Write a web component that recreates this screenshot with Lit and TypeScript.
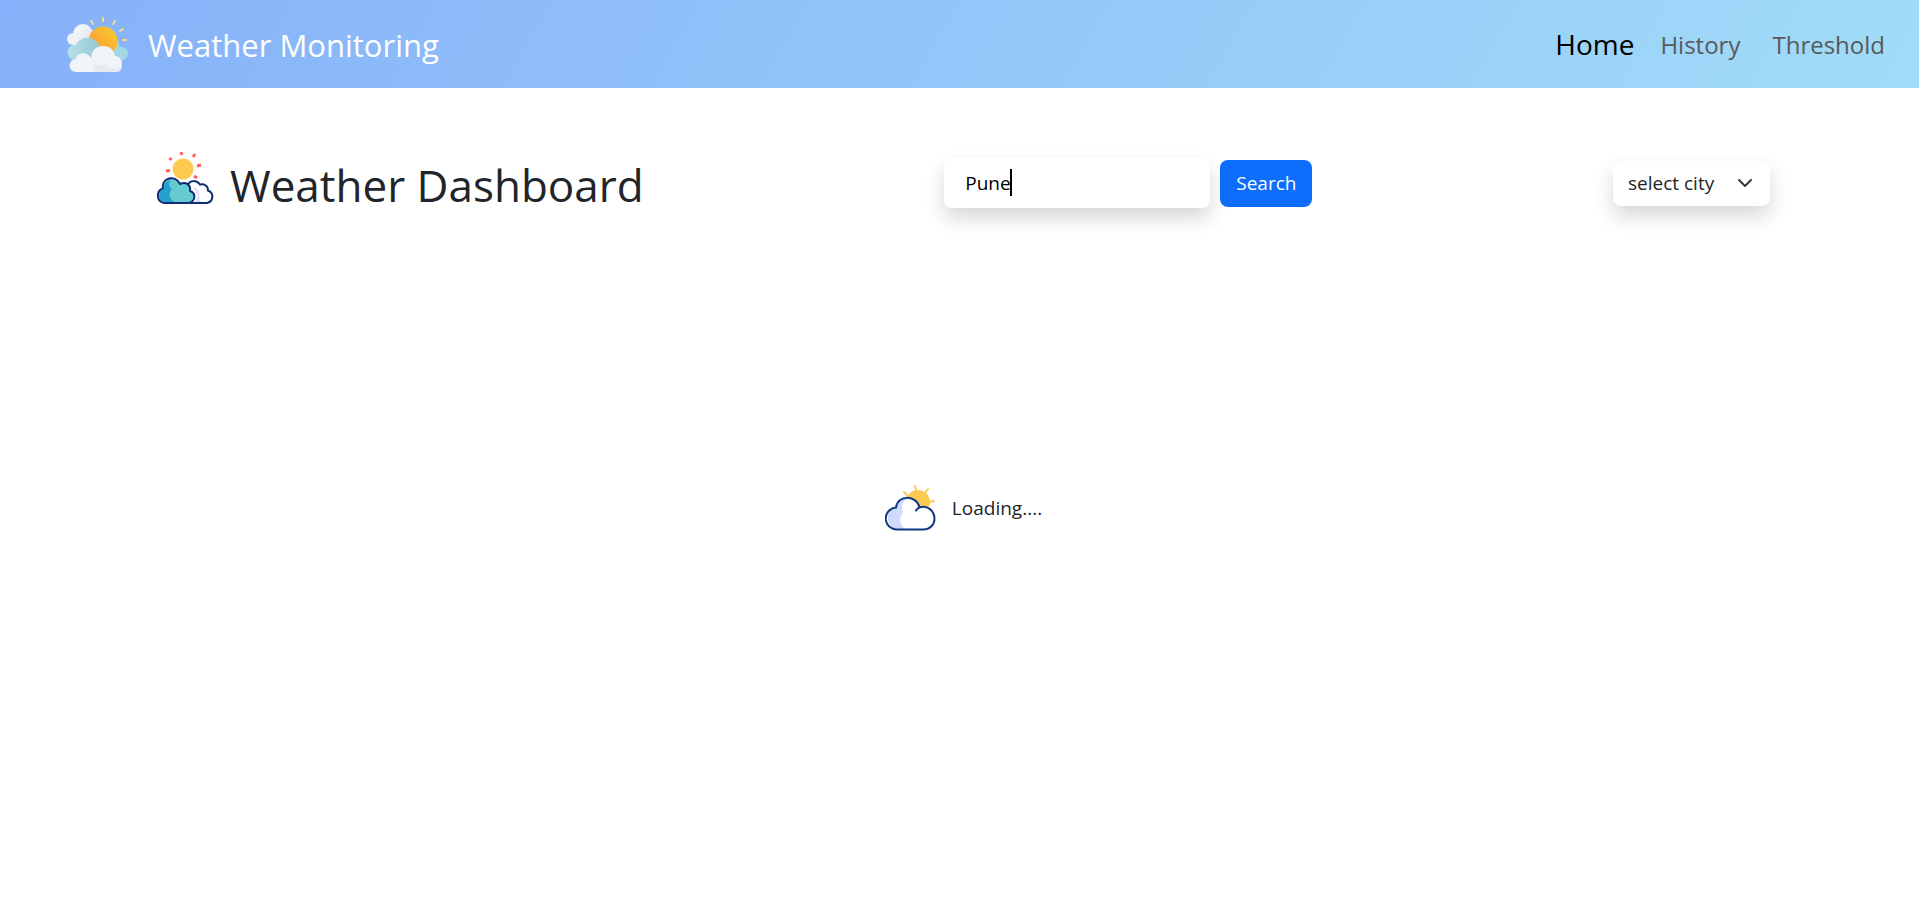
import { LitElement, html, css } from "lit";
import { customElement, state } from "lit/decorators.js";

const logo = html`<svg class="logo" viewBox="0 0 66 58" aria-hidden="true">
  <defs>
    <linearGradient id="sun" x1="0" y1="1" x2="1" y2="0">
      <stop offset="0.25" stop-color="#ffa034" /><stop offset="0.9" stop-color="#f4c92e" />
    </linearGradient>
    <linearGradient id="teal" x1="0" x2="1">
      <stop offset="0" stop-color="#b5dfe6" /><stop offset="1" stop-color="#93c9d6" />
    </linearGradient>
    <linearGradient id="pale" x1="0" y1="0" x2="1" y2="1">
      <stop offset="0.2" stop-color="#f4f6f9" /><stop offset="1" stop-color="#dce3eb" />
    </linearGradient>
  </defs>
  <g stroke="#f6dc86" stroke-width="2" stroke-linecap="round">
    <path d="M39 2v3M27 5l2 3M51 5l-2 3M59 13l-3 2M59 24h3" />
  </g>
  <circle cx="9" cy="23" r="6" fill="#eef0f5" />
  <circle cx="19" cy="18" r="10" fill="url(#pale)" />
  <path d="M8 23h20v6H9z" fill="#eef0f5" />
  <path d="M52 23c2 2 3 4 3 8 5-1 9 2 9 6.500s-3 6.500-7 6.500H44z" fill="#a3d8e2" />
  <circle cx="39" cy="25" r="14.500" fill="url(#sun)" />
  <path d="M9 44a8 8 0 0 1 0-15h3c3-6 9-8 14-7 6 1 11 7 10 14l-4 9z" fill="url(#teal)" />
  <path d="M12 56a6.500 6.500 0 0 1 0-13c0-7 12-8 15-1 1-9 6-12 12-12 7 0 11 4 12 10 5 0 7 4 7 8 0 5-2 8-6 8z" fill="#f1f4f7" />
  <path d="M27 43c4 3 5 9 2 13h23c4 0 6-3 6-6-8 5-14 2-16-2-5 4-12 1-15-5z" fill="#e4eaf0" />
</svg>`;

const dashboardIcon = html`<svg class="dash-icon" viewBox="0 0 57 54" aria-hidden="true">
  <g stroke="#ff6259" stroke-width="3">
    <path d="M24 0l1 3M38 2l-2 3M12.500 6l2 2M9 19l4-.5M40 14l4-1M37 24l3 2" />
  </g>
  <circle cx="26" cy="17" r="10.500" fill="#fecb50" />
  <path d="M34 51h16a6.500 6.500 0 0 0 1-12.500c0-5-4-7-8-6-4-5-10-4-12 0z" fill="#fff" stroke="#122d72" stroke-width="2" />
  <path d="M36 36c5 3 6 9 2 14h6c-3-3-1-8-2-10-1-3-4-5-6-4z" fill="#d6defa" />
  <path d="M7 51a7.500 7.500 0 0 1-1-14.500C4 26 18 22 23 32c6-3 11 1 10 7 6 2 6 10-1 12z" fill="#66cbd0" stroke="#122d72" stroke-width="2" stroke-linejoin="round" />
  <path d="M14 28c-5 1-8 4-7 9-7 2-6 13 1 13h9c-5-4-6-9-2-13-4-3-3-7-1-9z" fill="#26a0cf" />
</svg>`;

const loadingIcon = html`<svg class="load-icon" viewBox="0 0 52 46" aria-hidden="true">
  <g stroke="#fecb50" stroke-width="2" stroke-linecap="round">
    <path d="M30 1l1 4M43 4l-3 4M19 7l3 3M49 16l-4 1" />
  </g>
  <circle cx="33" cy="17" r="12" fill="#fecb50" />
  <path d="M12 44.500a11 11 0 0 1-1.500-22C13 9 32 10 34.500 23c8-3 15 3 15 11 0 6-5 10.500-11 10.500z" fill="#fff" />
  <path d="M12 44a11 11 0 0 1-1-21.500c1-6 6-10 12-9-6 4-7 8-5 14-4 5-4 12 2 16.500z" fill="#d0dafa" />
  <path d="M12.500 44.500a11 11 0 0 1-1.500-22C13 9 32 10 34.500 22.500c8-3 15 3.500 15 11.500 0 6-5 10.500-11 10.500zM34.500 22.500q-2.500 1-3.500 3" fill="none" stroke="#123a85" stroke-width="2" stroke-linecap="round" />
</svg>`;

@customElement("app-root")
export class AppRoot extends LitElement {
  @state() private query = "Pune";
  @state() private loading = true;

  static styles = css`
    :host {
      display: block;
      min-height: 100vh;
      background: #fff;
      color: #212529;
      font: 400 19px/30px "Segoe UI", "Open Sans", "Noto Sans", sans-serif;
    }
    * { box-sizing: border-box; }
    svg { display: block; flex: none; }
    .navbar {
      display: flex;
      align-items: center;
      justify-content: space-between;
      height: 88px;
      padding: 2px 34px 0 64px;
      background: linear-gradient(120deg, #86b0f9, #a1dcf8);
    }
    .brand {
      display: flex;
      align-items: center;
      gap: 18px;
      color: #fff;
      font-size: 31px;
      text-decoration: none;
    }
    .logo { width: 66px; height: 58px; }
    .links {
      display: flex;
      align-items: center;
      gap: 32px;
      margin: 0;
      padding: 0;
      list-style: none;
      font-size: 24px;
    }
    .link { color: #58595b; text-decoration: none; }
    .link.active { color: #000; font-size: 28px; }
    .links li:first-child { margin-right: -6px; }
    .toolbar {
      display: flex;
      align-items: center;
      justify-content: space-between;
      padding: 63px 149px 0 157px;
    }
    .title {
      display: flex;
      align-items: center;
      gap: 16px;
    }
    .title h1 { margin: 0; padding-top: 4px; font-size: 44px; font-weight: 400; line-height: 60px; }
    .dash-icon { width: 57px; height: 54px; margin-bottom: 8px; }
    .search { display: flex; align-items: center; gap: 10px; }
    .field { position: relative; }
    .input {
      display: block;
      width: 266px;
      height: 50px;
      padding: 0 21px;
      border: 0;
      border-radius: 8px;
      outline: 0;
      background: #fff;
      box-shadow: 0 10px 20px rgba(0, 0, 0, 0.16);
      color: #000;
      font: inherit;
    }
    .caret { position: absolute; top: 11px; left: 66px; width: 2px; height: 27px; background: #000; }
    .button {
      height: 47px;
      padding: 0 16px;
      border: 0;
      border-radius: 8px;
      background: #0d6efd;
      color: #fff;
      font: inherit;
    }
    .select {
      width: 157px;
      height: 45px;
      padding: 0 40px 0 15px;
      border: 0;
      border-radius: 8px;
      appearance: none;
      background: #fff url("data:image/svg+xml,%3Csvg xmlns='http://www.w3.org/2000/svg' viewBox='0 0 16 16'%3E%3Cpath fill='none' stroke='%23343a40' stroke-linecap='round' stroke-linejoin='round' stroke-width='2' d='m2 5 6 6 6-6'/%3E%3C/svg%3E") no-repeat right 17px center / 16px 16px;
      box-shadow: 0 10px 20px rgba(0, 0, 0, 0.16);
      color: #212529;
      font: inherit;
    }
    .loading {
      display: flex;
      align-items: center;
      justify-content: center;
      gap: 15px;
      padding: 270px 0 0 8px;
    }
    .load-icon { width: 52px; height: 46px; }
  `;

  private onInput(e: Event) {
    this.query = (e.target as HTMLInputElement).value;
  }

  render() {
    return html`
      <header class="navbar">
        <a class="brand" href="#">${logo}<span>Weather Monitoring</span></a>
        <nav>
          <ul class="links">
            <li><a class="link active" href="#home" aria-current="page">Home</a></li>
            <li><a class="link" href="#history">History</a></li>
            <li><a class="link" href="#threshold">Threshold</a></li>
          </ul>
        </nav>
      </header>
      <main>
        <section class="toolbar">
          <div class="title">${dashboardIcon}<h1>Weather Dashboard</h1></div>
          <form class="search" @submit=${(e: Event) => e.preventDefault()}>
            <div class="field">
              <input class="input" type="text" aria-label="City" .value=${this.query} @input=${this.onInput} />
              <span class="caret"></span>
            </div>
            <button class="button" type="submit">Search</button>
          </form>
          <select class="select" aria-label="Select city">
            <option>select city</option>
          </select>
        </section>
        ${this.loading
          ? html`<div class="loading" role="status">${loadingIcon}<span>Loading....</span></div>`
          : ""}
      </main>
    `;
  }
}
